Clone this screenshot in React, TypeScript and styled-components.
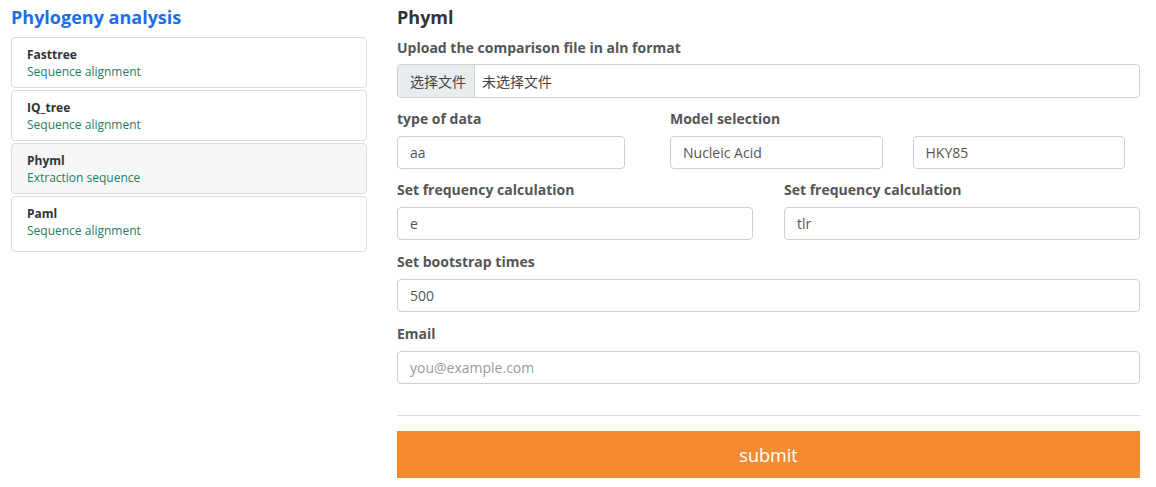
import React from "react";
import styled, { createGlobalStyle } from "styled-components";

const Global = createGlobalStyle`
  html, body { margin: 0; padding: 0; background: #fff; }
  body { font-family: "Open Sans", "Noto Sans CJK SC", sans-serif; }
  * { box-sizing: border-box; }
`;

const Page = styled.div`
  display: flex;
  padding: 5px 16px 0 11px;
`;

const Side = styled.aside`
  width: 356px;
  flex: none;
  margin-right: 30px;
`;

const SideTitle = styled.h2`
  margin: 0 0 8px;
  font-size: 18px;
  line-height: 24px;
  font-weight: 700;
  color: #1c6fe8;
`;

const CardList = styled.div`
  display: flex;
  flex-direction: column;
  gap: 2px;
`;

const Card = styled.div<{ $active?: boolean }>`
  height: 51px;
  padding: 8px 15px 0;
  border: 1px solid #dcdcdc;
  border-radius: 4px;
  background: ${(p) => (p.$active ? "#f6f7f9" : "#fff")};
  &:last-child { height: 56px; }
`;

const CardTitle = styled.div`
  font-size: 12px;
  line-height: 17px;
  font-weight: 700;
  color: #333;
`;

const CardSub = styled.div`
  font-size: 12px;
  line-height: 17px;
  color: #1d8060;
`;

const Main = styled.main`
  flex: 1;
  min-width: 0;
`;

const MainTitle = styled.h2`
  margin: 0 0 9px;
  font-size: 18px;
  line-height: 24px;
  font-weight: 700;
  color: #333;
`;

const Group = styled.div<{ $mb?: number }>`
  margin-bottom: ${(p) => p.$mb ?? 11}px;
`;

const Label = styled.div<{ $gap?: number }>`
  font-size: 14px;
  line-height: 20px;
  font-weight: 700;
  color: #555;
  margin-bottom: ${(p) => p.$gap ?? 7}px;
`;

const Field = styled.div<{ $placeholder?: boolean }>`
  height: 33px;
  display: flex;
  align-items: center;
  padding: 0 12px;
  border: 1px solid #cfcfcf;
  border-radius: 4px;
  font-size: 14px;
  color: ${(p) => (p.$placeholder ? "#9a9a9a" : "#555")};
  background: #fff;
`;

const FileBox = styled.div`
  height: 34px;
  display: flex;
  align-items: stretch;
  border: 1px solid #cfcfcf;
  border-radius: 4px;
  overflow: hidden;
  font-size: 14px;
  color: #444;
`;

const FileButton = styled.span`
  display: flex;
  align-items: center;
  padding: 0 8px 0 12px;
  background: #e9ecef;
  border-right: 1px solid #d6d6d6;
  width: 77px;
`;

const FileName = styled.span`
  display: flex;
  align-items: center;
  padding-left: 7px;
`;

const RowTop = styled.div`
  display: grid;
  grid-template-columns: 228px 455px;
  column-gap: 45px;
`;

const Pair = styled.div`
  display: grid;
  grid-template-columns: 1fr 1fr;
  column-gap: 30px;
`;

const RowHalf = styled.div`
  display: grid;
  grid-template-columns: 1fr 1fr;
  column-gap: 31px;
`;

const Rule = styled.hr`
  margin: 31px 0 15px;
  border: 0;
  border-top: 1px solid #dcdcdc;
`;

const Submit = styled.button`
  width: 100%;
  height: 47px;
  border: 0;
  background: #f48b30;
  color: #fff;
  font-family: "Open Sans", sans-serif;
  font-size: 18px;
  cursor: pointer;
`;

const tools = [
  { name: "Fasttree", sub: "Sequence alignment" },
  { name: "IQ_tree", sub: "Sequence alignment" },
  { name: "Phyml", sub: "Extraction sequence", active: true },
  { name: "Paml", sub: "Sequence alignment" },
];

export default function App() {
  return (
    <>
      <Global />
      <Page>
        <Side>
          <SideTitle>Phylogeny analysis</SideTitle>
          <CardList>
            {tools.map((t) => (
              <Card key={t.name} $active={t.active}>
                <CardTitle>{t.name}</CardTitle>
                <CardSub>{t.sub}</CardSub>
              </Card>
            ))}
          </CardList>
        </Side>
        <Main>
          <MainTitle>Phyml</MainTitle>
          <Group>
            <Label $gap={6}>Upload the comparison file in aln format</Label>
            <FileBox>
              <FileButton>选择文件</FileButton>
              <FileName>未选择文件</FileName>
            </FileBox>
          </Group>
          <RowTop>
            <Group>
              <Label>type of data</Label>
              <Field>aa</Field>
            </Group>
            <Group>
              <Label>Model selection</Label>
              <Pair>
                <Field>Nucleic Acid</Field>
                <Field>HKY85</Field>
              </Pair>
            </Group>
          </RowTop>
          <RowHalf>
            <Group $mb={12}>
              <Label>Set frequency calculation</Label>
              <Field>e</Field>
            </Group>
            <Group $mb={12}>
              <Label>Set frequency calculation</Label>
              <Field>tlr</Field>
            </Group>
          </RowHalf>
          <Group $mb={12}>
            <Label>Set bootstrap times</Label>
            <Field>500</Field>
          </Group>
          <div>
            <Label>Email</Label>
            <Field $placeholder>you@example.com</Field>
          </div>
          <Rule />
          <Submit>submit</Submit>
        </Main>
      </Page>
    </>
  );
}
